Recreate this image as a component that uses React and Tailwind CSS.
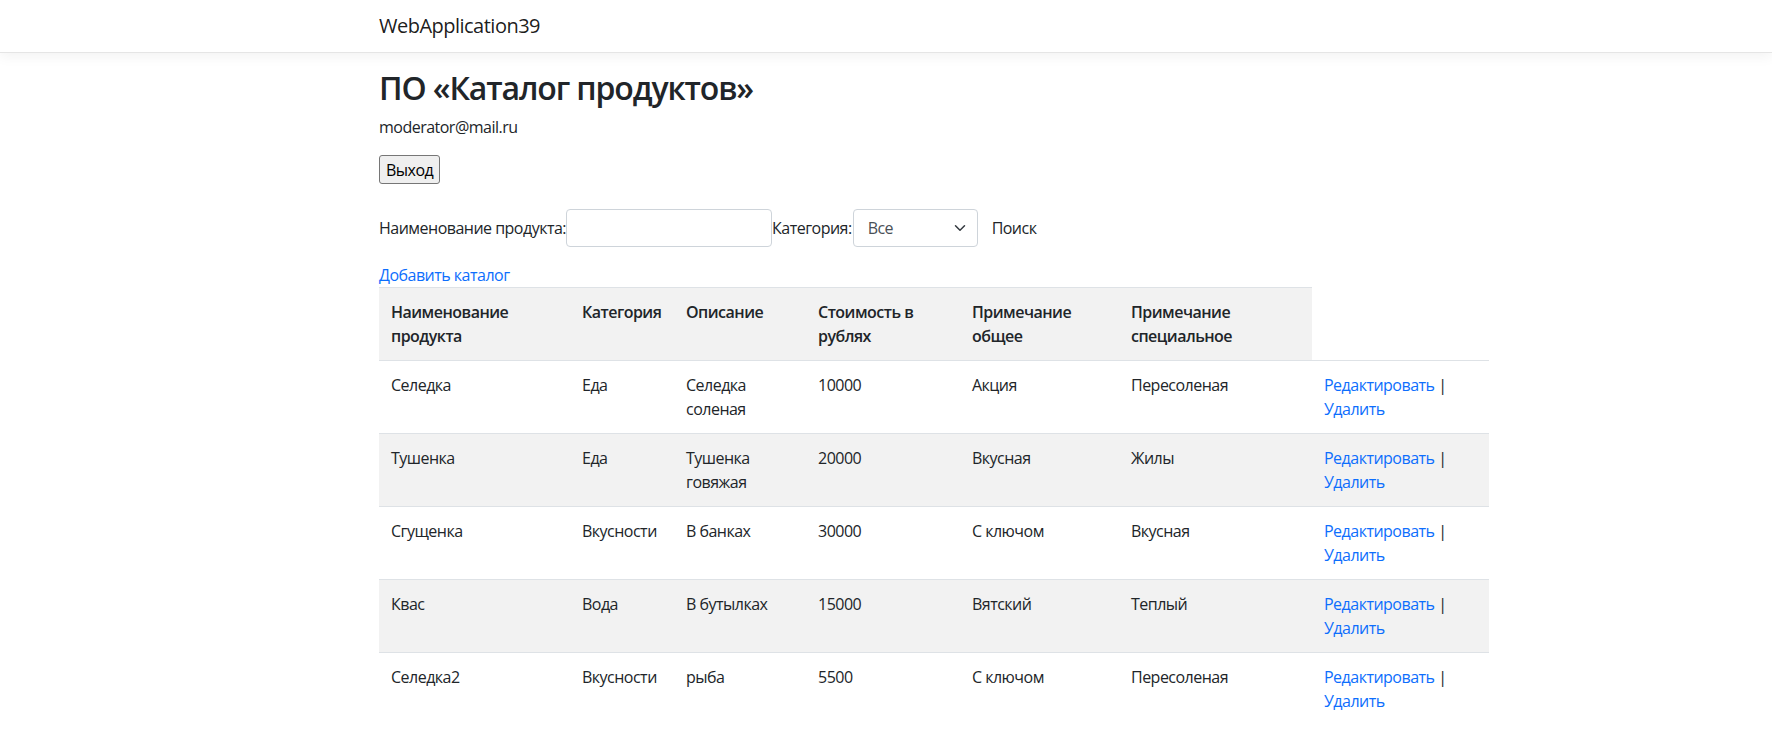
import React from "react";

const rows = [
  { name: "Селедка", cat: "Еда", desc: "Селедка соленая", price: "10000", note: "Акция", special: "Пересоленая" },
  { name: "Тушенка", cat: "Еда", desc: "Тушенка говяжая", price: "20000", note: "Вкусная", special: "Жилы" },
  { name: "Сгущенка", cat: "Вкусности", desc: "В банках", price: "30000", note: "С ключом", special: "Вкусная" },
  { name: "Квас", cat: "Вода", desc: "В бутылках", price: "15000", note: "Вятский", special: "Теплый" },
  { name: "Селедка2", cat: "Вкусности", desc: "рыба", price: "5500", note: "С ключом", special: "Пересоленая" },
];

const headers = [
  "Наименование продукта",
  "Категория",
  "Описание",
  "Стоимость в рублях",
  "Примечание общее",
  "Примечание специальное",
];

export default function App() {
  return (
    <div className="min-h-screen bg-white text-[16px] leading-6 tracking-[-0.032em] text-[#212529] font-['Segoe_UI','Open_Sans',sans-serif]">
      {/* Navbar */}
      <header className="h-[53px] border-b border-[#e5e5e5] bg-white shadow-[0_4px_12px_rgba(0,0,0,0.05)]">
        <div className="ml-[379px] flex h-[52px] w-[1110px] items-center">
          <a className="text-[20px] leading-[30px] text-[rgba(0,0,0,0.9)]">WebApplication39</a>
        </div>
      </header>

      <main className="ml-[379px] w-[1110px] pt-4">
        <h2 className="mb-2 text-[32px] font-semibold leading-[1.2] tracking-[-0.035em]">ПО «Каталог продуктов»</h2>
        <p className="mb-4">moderator@mail.ru</p>

        <button className="h-[29px] rounded-[3px] border border-[#767676] bg-[#efefef] px-[6px] text-[16px] leading-5 text-black">
          Выход
        </button>

        {/* Search form */}
        <div className="mt-[25px] flex h-[38px] items-center">
          <label>Наименование продукта:</label>
          <input
            type="text"
            className="h-[38px] w-[206px] rounded-[4px] border border-[#ced4da] bg-white px-3 outline-none"
          />
          <label>Категория:</label>
          <div className="relative ml-[1px]">
            <select className="h-[38px] w-[125px] appearance-none rounded-[4px] border border-[#ced4da] bg-white pl-[14px] pr-9 text-[16px] text-[#495057] outline-none">
              <option>Все</option>
            </select>
            <svg
              className="pointer-events-none absolute right-[11px] top-[13px]"
              width="14"
              height="12"
              viewBox="0 0 16 16"
            >
              <path d="m2 5 6 6 6-6" fill="none" stroke="#343a40" strokeWidth="2" strokeLinecap="round" strokeLinejoin="round" />
            </svg>
          </div>
          <button className="ml-[14px] text-[#212529]">Поиск</button>
        </div>

        <p className="mt-4">
          <a className="text-[#0d6efd]">Добавить каталог</a>
        </p>

        {/* Table */}
        <table className="w-[1110px] table-fixed border-separate border-spacing-0 text-left">
          <colgroup>
            <col className="w-[191px]" />
            <col className="w-[104px]" />
            <col className="w-[132px]" />
            <col className="w-[154px]" />
            <col className="w-[159px]" />
            <col className="w-[193px]" />
            <col className="w-[177px]" />
          </colgroup>
          <thead>
            <tr>
              {headers.map((h) => (
                <th key={h} className="border-t border-[#dee2e6] bg-[#f2f2f2] p-3 align-top font-semibold">
                  {h}
                </th>
              ))}
            </tr>
          </thead>
          <tbody>
            {rows.map((r, i) => (
              <tr key={r.name} className={i % 2 === 1 ? "bg-[#f2f2f2]" : ""}>
                <td className="border-t border-[#dee2e6] p-3 align-top">{r.name}</td>
                <td className="border-t border-[#dee2e6] p-3 align-top">{r.cat}</td>
                <td className="border-t border-[#dee2e6] p-3 align-top">{r.desc}</td>
                <td className="border-t border-[#dee2e6] p-3 align-top">{r.price}</td>
                <td className="border-t border-[#dee2e6] p-3 align-top">{r.note}</td>
                <td className="border-t border-[#dee2e6] p-3 align-top">{r.special}</td>
                <td className="border-t border-[#dee2e6] p-3 align-top">
                  <a className="text-[#0d6efd]">Редактировать</a> |{" "}
                  <a className="text-[#0d6efd]">Удалить</a>
                </td>
              </tr>
            ))}
          </tbody>
        </table>
      </main>
    </div>
  );
}
